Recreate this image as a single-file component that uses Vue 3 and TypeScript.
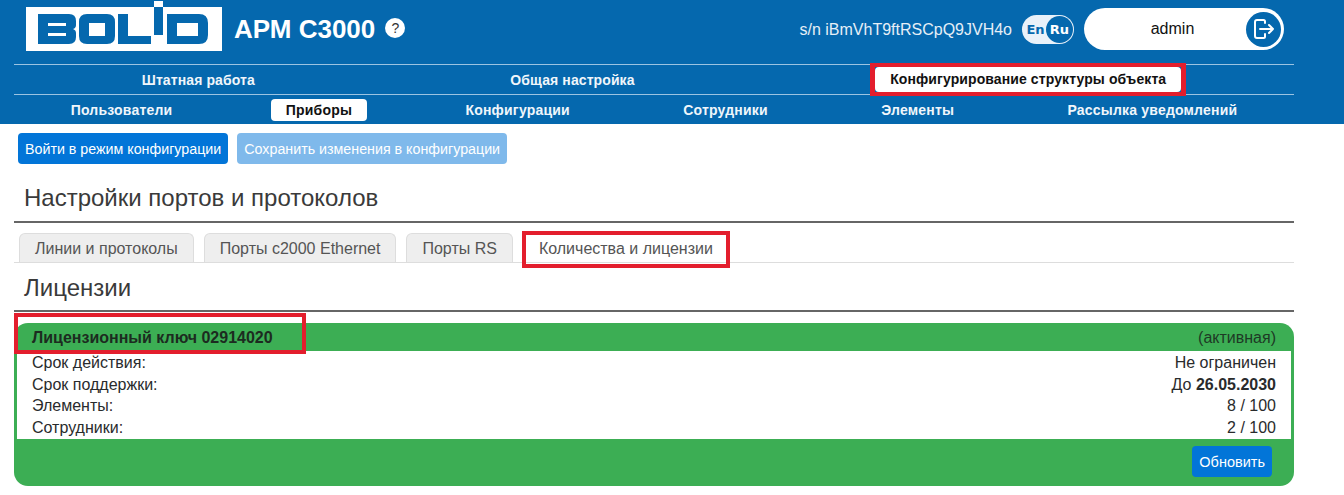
<script setup lang="ts">
const topNav = [
  { label: 'Штатная работа', active: false },
  { label: 'Общая настройка', active: false },
  { label: 'Конфигурирование структуры объекта', active: true },
]
const subNav = [
  { label: 'Пользователи', active: false },
  { label: 'Приборы', active: true },
  { label: 'Конфигурации', active: false },
  { label: 'Сотрудники', active: false },
  { label: 'Элементы', active: false },
  { label: 'Рассылка уведомлений', active: false },
]
const tabs = ['Линии и протоколы', 'Порты с2000 Ethernet', 'Порты RS']
const plainRows = [
  { label: 'Элементы:', value: '8 / 100' },
  { label: 'Сотрудники:', value: '2 / 100' },
]
</script>

<template>
  <div class="page">
    <header class="header">
      <div class="top">
        <svg class="logo" width="196" height="51" viewBox="26 0 196 51" aria-label="BOLID">
          <rect x="26" y="7" width="196" height="44" fill="#fff" />
          <rect x="154" y="1" width="9" height="6" fill="#fff" />
          <path fill="#0568ae" fill-rule="evenodd" d="M38 14H69Q76 14 76 21V25Q76 28 73 29Q76 30 76 33V37Q76 44 69 44H38ZM48 23V26H66V23ZM48 33V36H66V33Z" />
          <path fill="#0568ae" fill-rule="evenodd" d="M87 14H107Q115 14 115 22V36Q115 44 107 44H87Q79 44 79 36V22Q79 14 87 14ZM89 23V36H105V23Z" />
          <path fill="#0568ae" d="M118 14H128V36H151V44H118Z" />
          <rect x="154" y="7" width="9" height="28" fill="#0568ae" />
          <path fill="#0568ae" fill-rule="evenodd" d="M167 14H199Q208 14 208 23V35Q208 44 199 44H167ZM177 23V36H198V23Z" />
        </svg>
        <h1 class="title">АРМ С3000</h1>
        <span class="help">?</span>
        <span class="serial">s/n iBmVhT9ftRSCpQ9JVH4o</span>
        <div class="lang">
          <span class="lang-en">En</span>
          <span class="lang-ru">Ru</span>
        </div>
        <div class="user">
          <span class="user-name">admin</span>
          <span class="logout">
            <svg width="22" height="22" viewBox="0 0 22 22" fill="none" stroke="#fff" stroke-width="2" stroke-linejoin="round" stroke-linecap="round">
              <path d="M12 5V3.5Q12 2 10.5 2H4Q2 2 2 4V18Q2 20 4 20H10.5Q12 20 12 18.5V16" />
              <path d="M7 11H20M16 7L20 11L16 15" />
            </svg>
          </span>
        </div>
      </div>
      <nav class="nav-row nav-main">
        <a v-for="item in topNav" :key="item.label" class="nav-item" :class="{ active: item.active, marked: item.active }">{{ item.label }}</a>
      </nav>
      <nav class="nav-row nav-sub">
        <a v-for="item in subNav" :key="item.label" class="nav-item" :class="{ active: item.active }">{{ item.label }}</a>
      </nav>
    </header>

    <main class="content">
      <div class="actions">
        <button class="btn">Войти в режим конфигурации</button>
        <button class="btn disabled">Сохранить изменения в конфигурации</button>
      </div>
      <h2 class="section-title">Настройки портов и протоколов</h2>
      <div class="tabs">
        <span v-for="tab in tabs" :key="tab" class="tab">{{ tab }}</span>
        <span class="tab current marked">Количества и лицензии</span>
      </div>
      <h2 class="section-title licenses">Лицензии</h2>
      <section class="card">
        <div class="card-head">
          <strong class="key marked">Лицензионный ключ 02914020</strong>
          <span>(активная)</span>
        </div>
        <div class="card-body">
          <div class="row"><span>Срок действия:</span><span>Не ограничен</span></div>
          <div class="row"><span>Срок поддержки:</span><span>До <b>26.05.2030</b></span></div>
          <div v-for="row in plainRows" :key="row.label" class="row"><span>{{ row.label }}</span><span>{{ row.value }}</span></div>
        </div>
        <div class="card-foot">
          <button class="btn refresh">Обновить</button>
        </div>
      </section>
    </main>
  </div>
</template>

<style>
html, body { margin: 0; background: #fff; overflow: hidden; }
</style>

<style scoped>
.page { width: 1344px; height: 495px; font-family: "Liberation Sans", Arial, sans-serif; color: #292b2c; font-size: 16px; }
.header { background: #0568ae; height: 124px; color: #fff; }
.top { height: 64px; display: flex; align-items: flex-start; padding: 0 60px 0 26px; box-sizing: border-box; }
.logo { flex: none; }
.title { margin: 12px 0 0 12px; font-size: 26px; line-height: 34px; font-weight: 700; }
.help { width: 20px; height: 20px; margin: 18px 0 0 10px; border-radius: 50%; background: #fff; color: #333; font-size: 14px; line-height: 20px; text-align: center; }
.serial { margin: 20px 0 0 auto; line-height: 19px; color: #e6eff7; }
.lang { width: 52px; height: 29px; margin: 15px 0 0 10px; border-radius: 15px; background: #e9f1f9; display: flex; align-items: center; justify-content: space-between; box-sizing: border-box; padding: 0 1px 0 3px; font-family: "DejaVu Sans", sans-serif; font-weight: 700; font-size: 13px; }
.lang-en { color: #0568ae; width: 21px; text-align: center; }
.lang-ru { width: 27px; height: 27px; border-radius: 50%; background: #0568ae; color: #fff; line-height: 27px; text-align: center; }
.user { width: 200px; height: 42px; margin: 8px 0 0 10px; border-radius: 21px; background: #fff; color: #111; display: flex; align-items: center; box-sizing: border-box; padding: 0 3px 0 0; }
.user-name { flex: 1; text-align: center; padding-left: 15px; }
.logout { width: 35px; height: 35px; border-radius: 50%; background: #0568ae; display: flex; align-items: center; justify-content: center; }
.nav-row { margin: 0 50px 0 14px; height: 30px; box-sizing: border-box; border-top: 1px solid #9cc4e2; display: flex; justify-content: space-around; align-items: center; font-size: 14px; font-weight: 700; }
.nav-main { letter-spacing: 0.1px; }
.nav-sub { letter-spacing: 0.2px; }
.nav-item { padding: 0 15px; height: 22px; line-height: 22px; border-radius: 4px; white-space: nowrap; color: #f0f6fb; }
.nav-item.active { background: #fff; color: #111; }
.nav-main .nav-item.active { height: 25px; line-height: 25px; }
.marked { position: relative; }
.marked::after { content: ""; position: absolute; inset: -4px -5px; border: 4px solid #e31e2d; border-width: 4px 5px; pointer-events: none; border-radius: 0; }
.content { margin: 0 50px 0 14px; }
.actions { display: flex; gap: 9px; padding: 9px 0 0 4px; }
.btn { height: 31px; border: 0; border-radius: 4px; background: #0275d8; color: #fff; font-family: inherit; font-size: 14.25px; padding: 0 7px; }
.btn.disabled { opacity: 0.5; }
.btn.refresh { font-size: 14.5px; }
.section-title { margin: 0; font-weight: 400; font-size: 24px; color: #3a3a3a; padding-left: 10px; }
.actions + .section-title { margin-top: 17px; height: 40px; line-height: 33px; border-bottom: 2px solid #666; }
.tabs { display: flex; gap: 10px; padding: 10px 0 0 5px; height: 29px; border-bottom: 1px solid #ddd; }
.tab { height: 28px; line-height: 30px; padding: 0 15px; background: #eee; border: 1px solid #ddd; border-bottom: 0; border-radius: 6px 6px 0 0; color: #555; white-space: nowrap; }
.tab.current { background: #fff; border-color: transparent; }
.tab.current::after { inset: -3px -2px -6px -2px; border-width: 4px; }
.licenses { height: 48px; line-height: 47px; border-bottom: 2px solid #666; box-sizing: border-box; margin-top: 1px; }
.card { margin-top: 11px; height: 163px; background: #3cae54; border-radius: 14px; display: flex; flex-direction: column; }
.card-head { height: 28px; box-sizing: border-box; padding: 2px 18px 0; display: flex; justify-content: space-between; align-items: center; color: #1e3a25; }
.key { color: #1c2b20; }
.key::after { inset: -16px -33px -7px -18px; border-width: 4px; }
.card-body { margin: 0 3px; background: #fff; height: 88px; padding: 1px 15px 0; box-sizing: border-box; }
.row { display: flex; justify-content: space-between; line-height: 21.7px; height: 21.7px; }
.card-foot { display: flex; justify-content: flex-end; padding: 7px 22px 0 0; }
</style>
